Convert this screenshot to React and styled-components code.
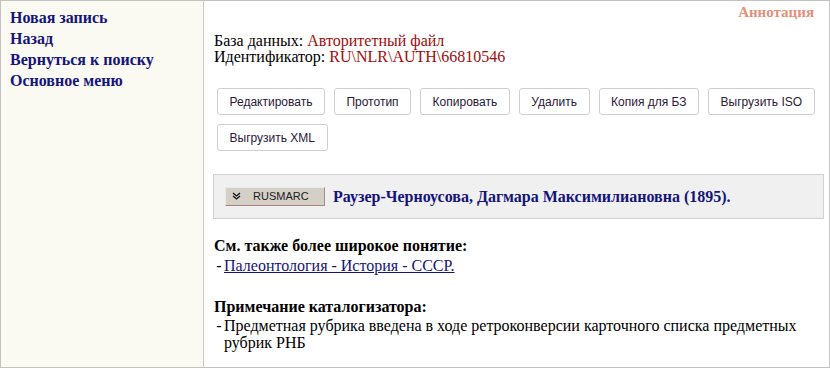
import React from "react";
import styled, { createGlobalStyle } from "styled-components";

const Global = createGlobalStyle`
  html, body {
    margin: 0;
    padding: 0;
    background: #ffffff;
  }
`;

const Frame = styled.div`
  display: flex;
  width: 830px;
  height: 368px;
  box-sizing: border-box;
  border: 1px solid #c3c3c3;
  font-family: "Liberation Serif", "Times New Roman", serif;
  font-size: 16px;
  color: #000;
`;

const Sidebar = styled.nav`
  width: 203px;
  flex-shrink: 0;
  background: #fbfaf2;
  border-right: 1px solid #c8c8c8;
  padding: 6px 0 0 9px;
  box-sizing: border-box;
  display: flex;
  flex-direction: column;
`;

const MenuLink = styled.a`
  font-weight: bold;
  color: #14147a;
  text-decoration: none;
  line-height: 21px;
  cursor: pointer;
`;

const Main = styled.main`
  flex: 1;
  padding: 3px 5px 0 9px;
  display: flex;
  flex-direction: column;
`;

const Annotation = styled.div`
  align-self: flex-end;
  margin-right: 10px;
  font-weight: bold;
  font-size: 15px;
  color: #e4907a;
  line-height: 17px;
`;

const Info = styled.div`
  margin-top: 12px;
  padding-left: 1px;
  line-height: 16px;
`;

const Value = styled.span`
  color: #a20c0c;
`;

const Buttons = styled.div`
  display: flex;
  flex-wrap: wrap;
  gap: 9px;
  margin-top: 23px;
  padding-left: 4px;
`;

const Button = styled.button`
  height: 27px;
  padding: 0 11.5px;
  background: #ffffff;
  border: 1px solid #cfcfcf;
  border-radius: 3px;
  font-family: "Liberation Sans", Arial, sans-serif;
  font-size: 12px;
  color: #2a1838;
  cursor: pointer;
`;

const Panel = styled.section`
  margin-top: 23px;
  height: 45px;
  box-sizing: border-box;
  background: #f0f0f0;
  border: 1px solid #d3d1cb;
  display: flex;
  align-items: center;
  padding: 0 11px;
  gap: 8px;
`;

const FormatButton = styled.button`
  width: 100px;
  height: 19px;
  padding: 0 0 0 6px;
  margin-top: -1px;
  display: flex;
  align-items: center;
  gap: 12px;
  background: #d4d0c8;
  border: 1px solid;
  border-color: #ebe9e4 #9c9090 #b08080 #ebe9e4;
  font-family: "Liberation Sans", Arial, sans-serif;
  font-size: 11px;
  color: #202020;
`;

const Title = styled.h1`
  margin: 0;
  font-size: 16px;
  font-weight: bold;
  color: #14147a;
`;

const Block = styled.div`
  margin-top: ${(p) => p.$top}px;
  padding-left: 1px;
`;

const Heading = styled.div`
  font-weight: bold;
  line-height: 20px;
`;

const Item = styled.div`
  display: flex;
  margin-top: ${(p) => p.$gap || 0}px;
  line-height: 17px;
  padding-right: 20px;
`;

const Dash = styled.span`
  width: 10px;
  flex-shrink: 0;
  text-align: center;
`;

const Link = styled.a`
  color: #14147a;
  text-decoration: underline;
`;

function Chevrons() {
  return (
    <svg width="9" height="8" viewBox="0 0 9 8">
      <polyline points="1,1 4.5,4 8,1" fill="none" stroke="#111" strokeWidth="1.3" />
      <polyline points="1,4 4.5,7 8,4" fill="none" stroke="#111" strokeWidth="1.3" />
    </svg>
  );
}

const menu = ["Новая запись", "Назад", "Вернуться к поиску", "Основное меню"];
const actions = [
  "Редактировать",
  "Прототип",
  "Копировать",
  "Удалить",
  "Копия для БЗ",
  "Выгрузить ISO",
  "Выгрузить XML",
];

export default function App() {
  return (
    <>
      <Global />
      <Frame>
        <Sidebar>
          {menu.map((m) => (
            <MenuLink key={m}>{m}</MenuLink>
          ))}
        </Sidebar>
        <Main>
          <Annotation>Аннотация</Annotation>
          <Info>
            База данных: <Value>Авторитетный файл</Value>
            <br />
            Идентификатор: <Value>RU\NLR\AUTH\66810546</Value>
          </Info>
          <Buttons>
            {actions.map((a) => (
              <Button key={a}>{a}</Button>
            ))}
          </Buttons>
          <Panel>
            <FormatButton>
              <Chevrons />
              RUSMARC
            </FormatButton>
            <Title>Раузер-Черноусова, Дагмара Максимилиановна (1895).</Title>
          </Panel>
          <Block $top={17}>
            <Heading>См. также более широкое понятие:</Heading>
            <Item $gap={1}>
              <Dash>-</Dash>
              <Link>Палеонтология - История - СССР.</Link>
            </Item>
          </Block>
          <Block $top={23}>
            <Heading>Примечание каталогизатора:</Heading>
            <Item>
              <Dash>-</Dash>
              <span>
                Предметная рубрика введена в ходе ретроконверсии карточного списка
                предметных рубрик РНБ
              </span>
            </Item>
          </Block>
        </Main>
      </Frame>
    </>
  );
}
